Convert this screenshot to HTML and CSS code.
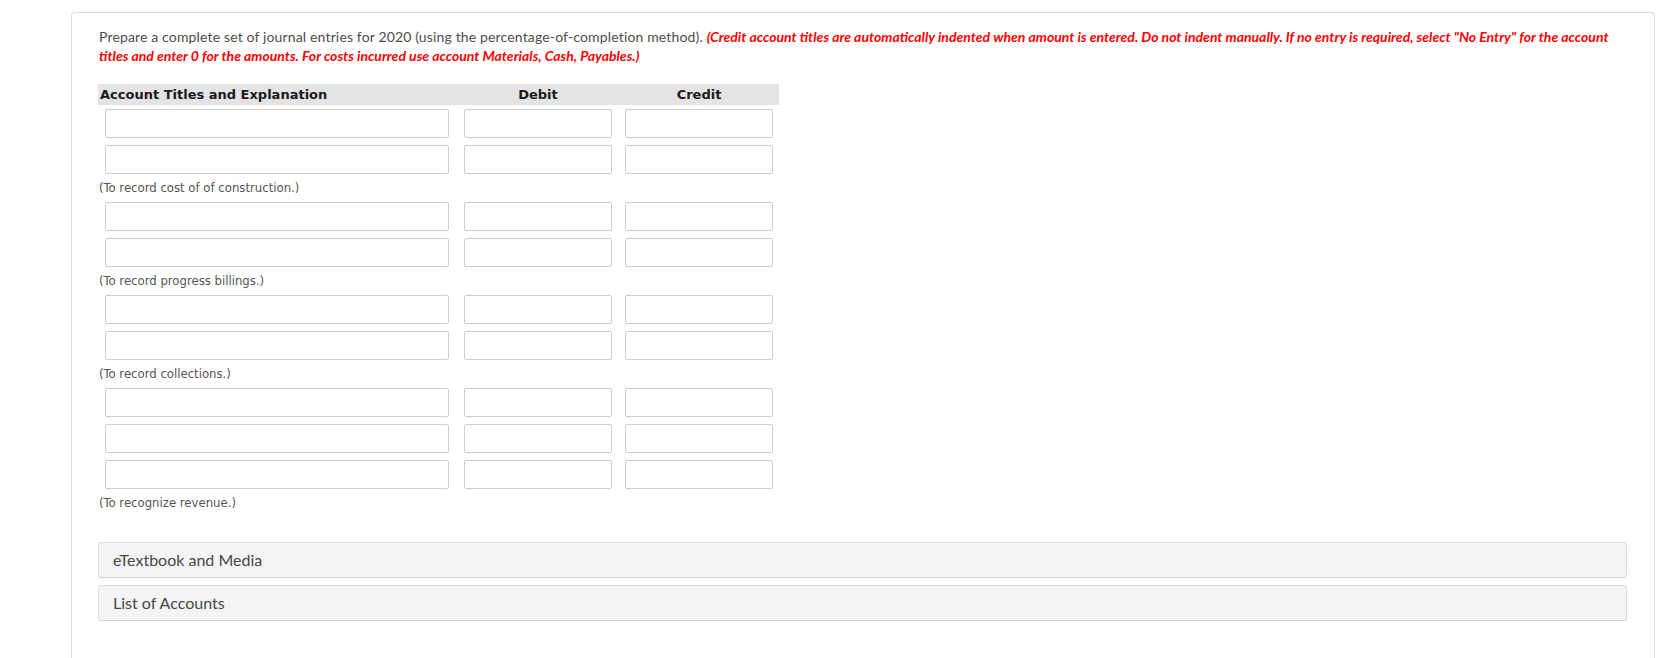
FILE: index.html
```html
<!DOCTYPE html>
<html>
<head>
<meta charset="utf-8">
<link rel="stylesheet" href="styles.css">
</head>
<body>
<div class="page">
  <div class="card">
    <p class="prompt">Prepare a complete set of journal entries for 2020 (using the percentage-of-completion method). <span class="note">(Credit account titles are automatically indented when amount is entered. Do not indent manually. If no entry is required, select "No Entry" for the account titles and enter 0 for the amounts. For costs incurred use account Materials, Cash, Payables.)</span></p>

    <div class="journal">
      <div class="hd hd-acct">Account Titles and Explanation</div>
      <div class="hd hd-num">Debit</div>
      <div class="hd hd-num">Credit</div>

      <div class="cell"><input class="in acct" type="text"></div>
      <div class="cell"><input class="in num" type="text"></div>
      <div class="cell cr"><input class="in num" type="text"></div>
      <div class="cell"><input class="in acct" type="text"></div>
      <div class="cell"><input class="in num" type="text"></div>
      <div class="cell cr"><input class="in num" type="text"></div>
      <div class="expl">(To record cost of of construction.)</div>

      <div class="cell"><input class="in acct" type="text"></div>
      <div class="cell"><input class="in num" type="text"></div>
      <div class="cell cr"><input class="in num" type="text"></div>
      <div class="cell"><input class="in acct" type="text"></div>
      <div class="cell"><input class="in num" type="text"></div>
      <div class="cell cr"><input class="in num" type="text"></div>
      <div class="expl">(To record progress billings.)</div>

      <div class="cell"><input class="in acct" type="text"></div>
      <div class="cell"><input class="in num" type="text"></div>
      <div class="cell cr"><input class="in num" type="text"></div>
      <div class="cell"><input class="in acct" type="text"></div>
      <div class="cell"><input class="in num" type="text"></div>
      <div class="cell cr"><input class="in num" type="text"></div>
      <div class="expl">(To record collections.)</div>

      <div class="cell"><input class="in acct" type="text"></div>
      <div class="cell"><input class="in num" type="text"></div>
      <div class="cell cr"><input class="in num" type="text"></div>
      <div class="cell"><input class="in acct" type="text"></div>
      <div class="cell"><input class="in num" type="text"></div>
      <div class="cell cr"><input class="in num" type="text"></div>
      <div class="cell"><input class="in acct" type="text"></div>
      <div class="cell"><input class="in num" type="text"></div>
      <div class="cell cr"><input class="in num" type="text"></div>
      <div class="expl">(To recognize revenue.)</div>
    </div>

    <div class="panels">
      <div class="panel">eTextbook and Media</div>
      <div class="panel">List of Accounts</div>
    </div>
  </div>
</div>
</body>
</html>
```

FILE: styles.css
```css
html, body {
  margin: 0;
  padding: 0;
  background: #ffffff;
}

.page {
  padding: 12px 6px 0 71px;
}

.card {
  border: 1px solid #dcdcdc;
  border-bottom: none;
  border-radius: 4px 4px 0 0;
  padding: 14px 27px 80px 26px;
  min-height: 600px;
}

.prompt {
  margin: 0 0 19px 1px;
  font-family: Lato, "Open Sans", sans-serif;
  font-size: 14px;
  line-height: 19px;
  color: #4d4d4d;
  letter-spacing: 0.15px;
}

.note {
  color: #ff0000;
  font-weight: bold;
  font-style: italic;
  letter-spacing: 0;
}

.journal {
  display: grid;
  grid-template-columns: 359px 162px 160px;
  width: 681px;
}

.hd {
  background: #e4e4e4;
  height: 21px;
  line-height: 21px;
  font-family: "DejaVu Sans", sans-serif;
  font-weight: bold;
  font-size: 13px;
  color: #1a1a1a;
}

.hd-acct {
  padding-left: 2px;
}

.hd-num {
  text-align: center;
}

.cell {
  padding: 4px 0 3px 7px;
  height: 29px;
}

.cell.cr {
  padding-left: 6px;
}

.in {
  display: block;
  box-sizing: border-box;
  height: 29px;
  margin: 0;
  border: 1px solid #cdcdcd;
  border-radius: 2px;
  background: #ffffff;
  padding: 0 6px;
  font-family: "DejaVu Sans", sans-serif;
  font-size: 13px;
}

.in.acct {
  width: 344px;
}

.in.num {
  width: 148px;
}

.expl {
  grid-column: 1 / -1;
  height: 21px;
  line-height: 21px;
  padding-left: 1px;
  font-family: "DejaVu Sans Condensed", "DejaVu Sans", sans-serif;
  font-size: 13px;
  color: #555555;
}

.panels {
  margin-top: 29px;
  display: flex;
  flex-direction: column;
  gap: 7px;
}

.panel {
  box-sizing: border-box;
  height: 36px;
  line-height: 34px;
  padding-left: 14px;
  background: #f4f4f4;
  border: 1px solid #dddddd;
  border-bottom-color: #d4d4d4;
  border-radius: 3px;
  font-family: Lato, "Open Sans", sans-serif;
  font-size: 16px;
  color: #474747;
}
```
